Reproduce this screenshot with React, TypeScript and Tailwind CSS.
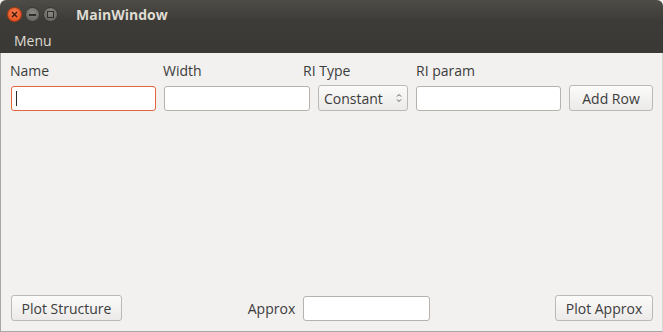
import * as React from "react"

const font = { fontFamily: '"Open Sans", "Noto Sans", "DejaVu Sans", sans-serif' }

function TitleButton({ kind }: { kind: "close" | "min" | "max" }) {
  const bg =
    kind === "close"
      ? "bg-[radial-gradient(circle_at_50%_35%,#f47a4e,#df4a16)] border-[#b33a10]"
      : "bg-[radial-gradient(circle_at_50%_35%,#8a8983,#5d5c57)] border-[#3a3935]"
  return (
    <div className={`w-[15px] h-[15px] rounded-full border flex items-center justify-center ${bg}`}>
      {kind === "close" && (
        <svg width="7" height="7" viewBox="0 0 7 7">
          <path d="M1 1L6 6M6 1L1 6" stroke="#3b1a0c" strokeWidth="1.4" />
        </svg>
      )}
      {kind === "min" && <div className="w-[7px] h-[2px] bg-[#2f2e2b]" />}
      {kind === "max" && <div className="w-[7px] h-[7px] border border-[#2f2e2b]" />}
    </div>
  )
}

function TextField({ className = "", focused = false, cursor = false }: { className?: string; focused?: boolean; cursor?: boolean }) {
  return (
    <div
      className={`h-[25px] rounded-[3px] bg-white flex items-center px-[4px] border ${
        focused ? "border-[#e2653c]" : "border-[#b6b3ae]"
      } ${className}`}
    >
      {cursor && <div className="w-px h-[15px] bg-[#2a2a2a]" />}
    </div>
  )
}

function Button({ label, className = "" }: { label: string; className?: string }) {
  return (
    <div
      className={`h-[26px] rounded-[3px] border border-[#bcb9b4] bg-[linear-gradient(#fbfbfa,#ebeae8)] flex items-center justify-center text-[#3c3c3c] text-[14px] ${className}`}
    >
      {label}
    </div>
  )
}

export default function App() {
  return (
    <div className="w-[663px] h-[332px] bg-[#f2f1f0] flex flex-col overflow-hidden" style={font}>
      {/* 标题栏 + 菜单 */}
      <div className="h-[53px] rounded-t-[6px] bg-[linear-gradient(#4d4c47,#3c3b37_40%,#3a3935)] flex flex-col">
        <div className="h-[29px] flex items-center pl-[7px]">
          <div className="flex gap-[3px] items-center">
            <TitleButton kind="close" />
            <TitleButton kind="min" />
            <TitleButton kind="max" />
          </div>
          <span className="ml-[18px] text-[#dfdbd2] font-bold text-[14px]">MainWindow</span>
        </div>
        <div className="h-[24px] flex items-center pl-[14px] text-[#dfdbd2] text-[14px] pb-[1px]">Menu</div>
      </div>

      {/* 内容 */}
      <div className="flex-1 flex flex-col border-l border-b border-r border-[#a9a7a3] border-r-[#d8d6d2] text-[#3c3c3c] text-[14px]">
        <div className="flex pt-[7px] pl-[9px]">
          <span className="w-[153px]">Name</span>
          <span className="w-[140px]">Width</span>
          <span className="w-[113px]">RI Type</span>
          <span>RI param</span>
        </div>
        <div className="flex items-center pl-[10px] mt-[4px]">
          <TextField className="w-[145px]" focused cursor />
          <TextField className="w-[146px] ml-[8px]" />
          <div className="ml-[8px] w-[90px] h-[26px] rounded-[3px] border border-[#bcb9b4] bg-[linear-gradient(#fbfbfa,#ebeae8)] flex items-center justify-between pl-[5px] pr-[5px]">
            <span>Constant</span>
            <svg width="6" height="12" viewBox="0 0 6 12">
              <path d="M1 4.5L3 2.5L5 4.5" fill="none" stroke="#555" strokeWidth="1" />
              <path d="M1 7.5L3 9.5L5 7.5" fill="none" stroke="#555" strokeWidth="1" />
            </svg>
          </div>
          <TextField className="w-[145px] ml-[8px]" />
          <Button label="Add Row" className="w-[84px] ml-[8px]" />
        </div>
        <div className="flex-1" />
        <div className="flex items-center pl-[10px] pr-[9px] pb-[10px]">
          <Button label="Plot Structure" className="w-[111px]" />
          <div className="flex-1 flex items-center justify-center gap-[8px] pl-[1px]">
            <span>Approx</span>
            <TextField className="w-[127px]" />
          </div>
          <Button label="Plot Approx" className="w-[98px]" />
        </div>
      </div>
    </div>
  )
}
